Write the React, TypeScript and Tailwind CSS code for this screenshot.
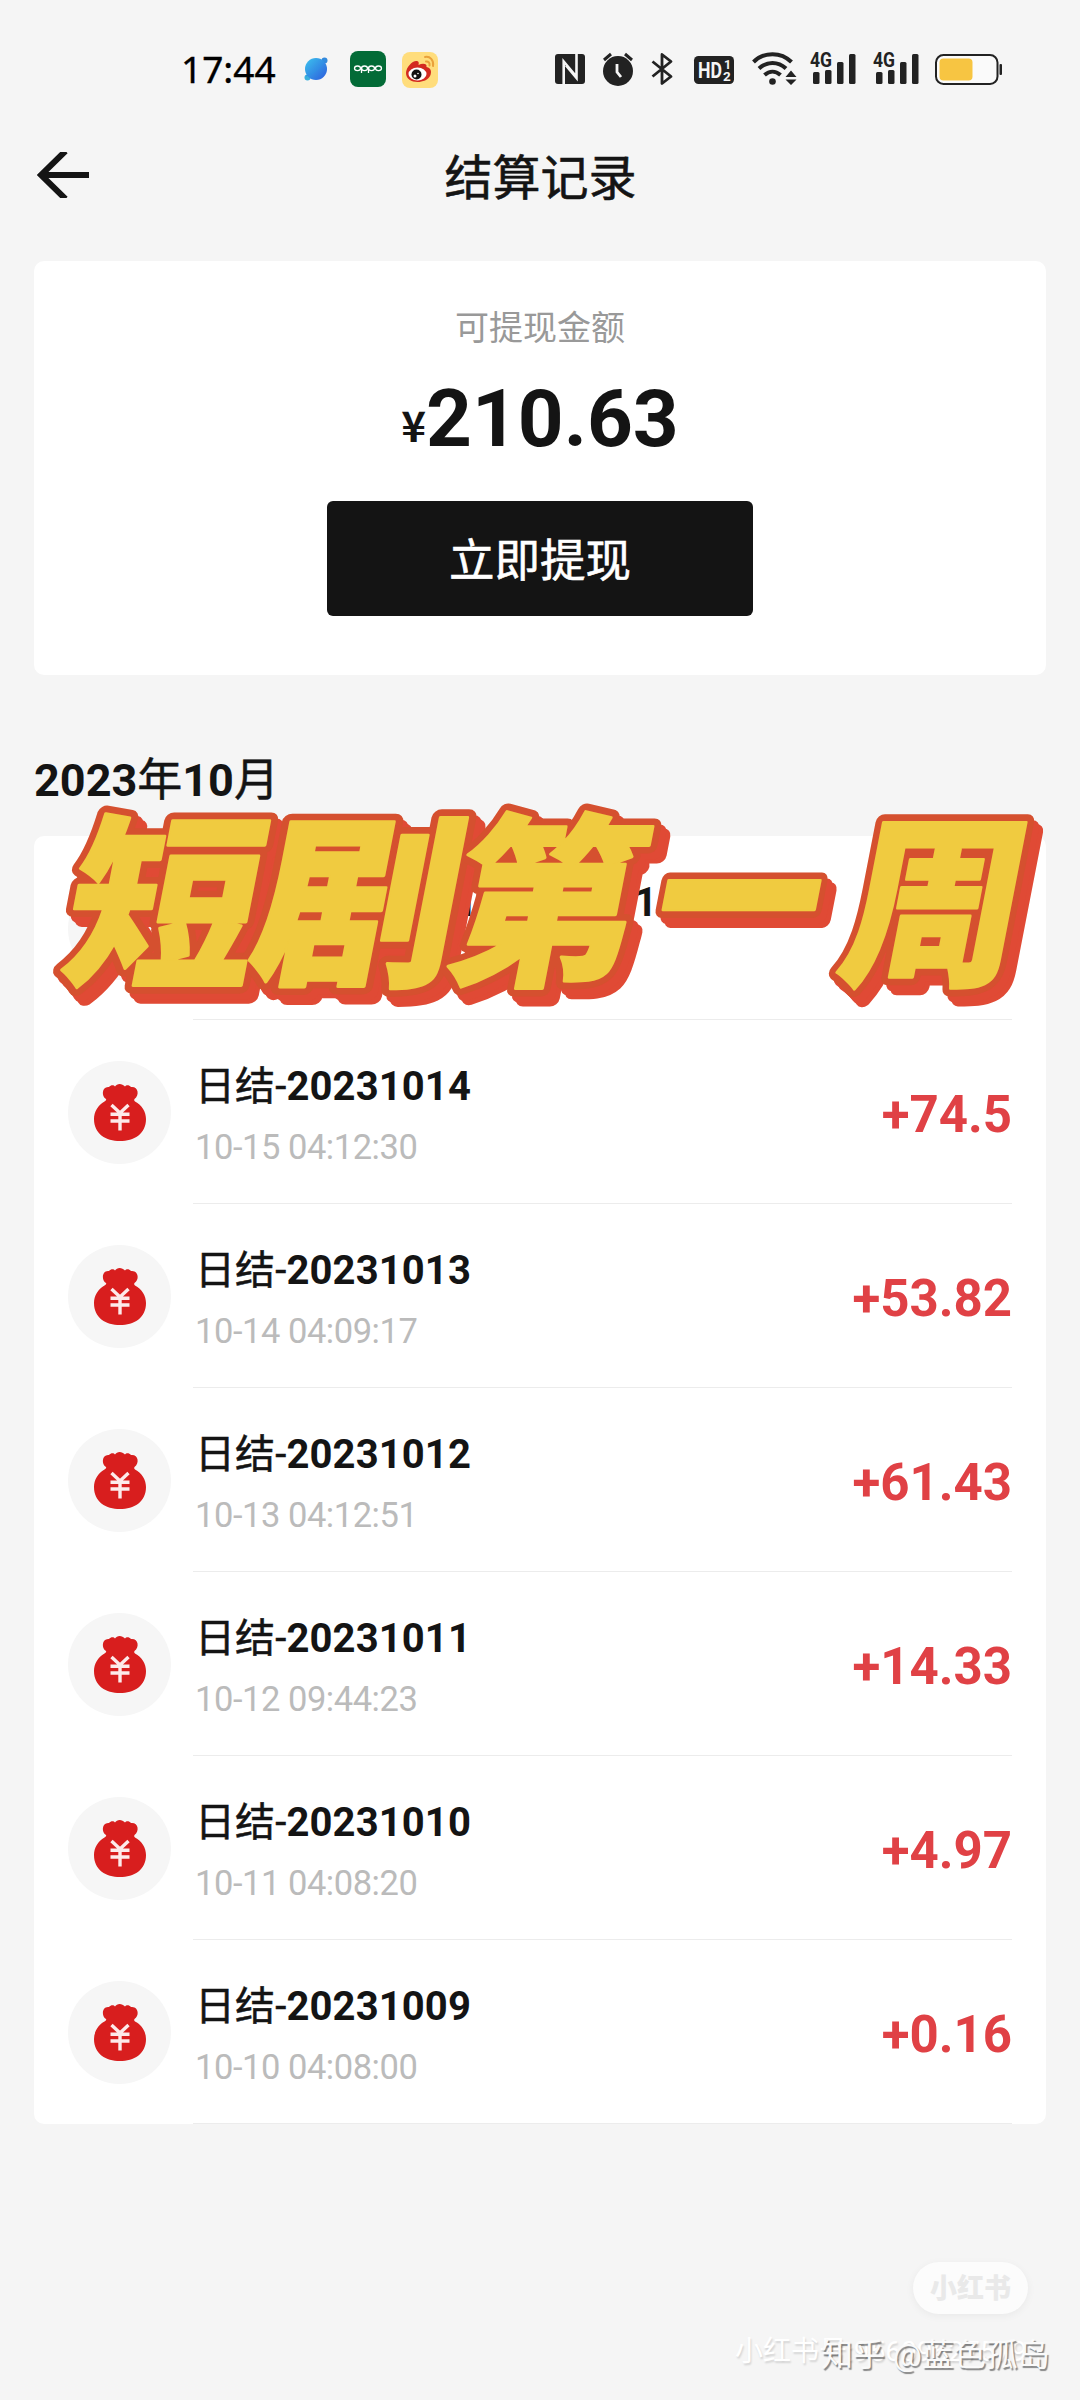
import type { ReactNode } from 'react';

const records = [
  { title: '日结-2023/10/15~2023/10', time: '10-16 04:10:22', amount: '+1.42' },
  { title: '日结-20231014', time: '10-15 04:12:30', amount: '+74.5' },
  { title: '日结-20231013', time: '10-14 04:09:17', amount: '+53.82' },
  { title: '日结-20231012', time: '10-13 04:12:51', amount: '+61.43' },
  { title: '日结-20231011', time: '10-12 09:44:23', amount: '+14.33' },
  { title: '日结-20231010', time: '10-11 04:08:20', amount: '+4.97' },
  { title: '日结-20231009', time: '10-10 04:08:00', amount: '+0.16' },
];

// x / y are the skewed baseline origin, sx / sy stretch the glyph
const headline = [
  { char: '短', x: 57, y: 971, sx: 0.99, sy: 0.95 },
  { char: '剧', x: 245, y: 971, sx: 1.05, sy: 0.95 },
  { char: '第', x: 440, y: 971, sx: 0.98, sy: 0.95 },
  { char: '一', x: 646, y: 967, sx: 0.84, sy: 0.95 },
  { char: '周', x: 834, y: 971, sx: 0.92, sy: 0.95 },
];

// Latin digits are bold while the Chinese characters stay medium
function Mixed({ children }: { children: string }) {
  return (
    <>
      {children.split(/([\u4e00-\u9fff]+-?)/).map((part, i) =>
        /[\u4e00-\u9fff]/.test(part) ? (
          <span className="font-normal [-webkit-text-stroke:0.5px_currentColor]" key={i}>
            {part}
          </span>
        ) : (
          part
        )
      )}
    </>
  );
}

function Card({
  className,
  children,
}: {
  className: string;
  children: ReactNode;
}) {
  return (
    <div className={`mx-[34px] rounded-[10px] bg-white ${className}`}>
      {children}
    </div>
  );
}

function MoneyBag() {
  return (
    <div className="flex h-[103px] w-[103px] shrink-0 items-center justify-center rounded-full bg-[#f6f6f6]">
      <svg className="h-[58px] w-[52px]" viewBox="0 0 52 58">
        <path
          fill="#d81e1e"
          d="M12 16C7 13 8 3 15 4c2-2.500 5-2 6-.5C23 0 28 0 31 3.500c1-1.500 4-2 6 .5 7-1 9 8 3.500 12-.5 1-.5 1.500.5 2.500C48 22 52 29 52 36c0 15-12 22-26 22S0 51 0 36c0-7 4-14 10.500-17.500 1.500-1 2-1.500 1.500-2.500z"
        />
        <path
          fill="none"
          stroke="#fdeaea"
          strokeWidth="3.400"
          d="M17.500 22l8.500 8 8.500-8M16.500 31.300h19M16.500 38h19M26 30v17.500"
        />
      </svg>
    </div>
  );
}

function Signal() {
  return (
    <svg className="h-[34px] w-[46px] overflow-visible" viewBox="0 0 46 34" fill="#222">
      <text
        x="0"
        y="15"
        fontFamily="Roboto, sans-serif"
        fontWeight="700"
        fontSize="20"
        textLength="22"
        lengthAdjust="spacingAndGlyphs"
      >
        4G
      </text>
      <rect x="3" y="20" width="6.500" height="12" rx="1.500" />
      <rect x="15" y="18" width="6.500" height="14" rx="1.500" />
      <rect x="27" y="10" width="6.500" height="22" rx="1.500" />
      <rect x="39" y="2" width="6.500" height="30" rx="1.500" />
    </svg>
  );
}

function StatusBar() {
  return (
    <div className="flex h-[138px] items-start">
      <span className="ml-[181px] mt-[44px] w-[123px] font-['Noto_Sans',sans-serif] text-[37px] leading-[50px] text-black [-webkit-text-stroke:0.4px_currentColor]">
        17:44
      </span>
      <svg className="mt-[57px] h-6 w-6" viewBox="0 0 24 24">
        <defs>
          <linearGradient id="planet" x1="0" y1="0" x2="1" y2="1">
            <stop offset="0" stopColor="#3cc3ee" />
            <stop offset="1" stopColor="#2b5bdc" />
          </linearGradient>
        </defs>
        <circle cx="20.500" cy="3.500" r="3" fill="#3389dc" />
        <circle cx="3.500" cy="20.500" r="3" fill="#3bb0dd" />
        <circle cx="12" cy="12" r="11" fill="url(#planet)" />
        <path d="M2 19C9 17 17 10 21 2" stroke="#2e93e6" fill="none" />
      </svg>
      <svg className="mt-[51px] ml-[22px] h-9 w-9" viewBox="0 0 36 36">
        <rect width="36" height="36" rx="8" fill="#036b37" />
        <g fill="none" stroke="#fff" strokeWidth="1.300">
          <ellipse cx="7.500" cy="17.300" rx="3" ry="2.300" />
          <ellipse cx="14.500" cy="17.300" rx="3" ry="2.300" />
          <ellipse cx="21.500" cy="17.300" rx="3" ry="2.300" />
          <ellipse cx="28.500" cy="17.300" rx="3" ry="2.300" />
          <path d="M11.500 17v5M18.500 17v5" />
        </g>
      </svg>
      <svg className="mt-[52px] ml-4 h-9 w-9" viewBox="0 0 36 36">
        <rect width="36" height="36" rx="8" fill="#ffdd7c" />
        <path
          fill="#d32a20"
          d="M4 21C4 15 11 8 15 9c2 .5 2 2 1.500 4 4-2 9-1.500 8 2 5 1 5 5 4 8-2 5-8 7-13 7-6 0-11.500-3-11.500-9z"
        />
        <ellipse cx="15.500" cy="22" rx="9" ry="6.500" fill="#fff" />
        <circle cx="14.500" cy="22.500" r="5" fill="#111" />
        <circle cx="13" cy="24" r="1.500" fill="#fff" />
        <circle cx="16" cy="21.500" r=".8" fill="#fff" />
        <path
          fill="none"
          stroke="#e9a13b"
          strokeWidth="2"
          strokeLinecap="round"
          d="M23 5c5-1 9 3 8 9M24 9.500c2.500-.3 4 1.500 3.500 4"
        />
      </svg>

      <svg className="mt-[54px] ml-[117px] h-[30px] w-[30px]" viewBox="0 0 30 30">
        <rect width="30" height="30" rx="3" fill="#222" />
        <path
          fill="none"
          stroke="#f5f5f5"
          strokeWidth="2.600"
          d="M8.700 30V7.500L20 21M21.500 0v24L11 11.500"
        />
      </svg>
      <svg className="mt-[52px] ml-[17px] h-[34px] w-8" viewBox="0 0 32 34">
        <circle cx="16" cy="19" r="15" fill="#222" />
        <path d="M2 8l7-6M30 8l-7-6" stroke="#222" strokeWidth="3" />
        <path d="M15 12v8l4 5" fill="none" stroke="#f5f5f5" strokeWidth="2.800" />
      </svg>
      <svg className="mt-[52px] ml-4 h-[34px] w-6" viewBox="0 0 24 34">
        <path
          fill="none"
          stroke="#222"
          strokeWidth="2.800"
          strokeLinejoin="round"
          d="M2.500 9.500L21 24.500 12 31.500V2.500L21 9.500 2.500 24.500"
        />
      </svg>
      <svg className="mt-14 ml-5 h-7 w-10 overflow-visible" viewBox="0 0 40 28">
        <rect width="40" height="28" rx="4.500" fill="#222" />
        <g fill="#f5f5f5" fontFamily="Roboto, sans-serif" fontWeight="700">
          <text x="4" y="22" fontSize="22" textLength="24" lengthAdjust="spacingAndGlyphs">
            HD
          </text>
          <text x="30" y="13" fontSize="12.500">
            1
          </text>
          <text x="29" y="25" fontSize="13.500">
            2
          </text>
        </g>
      </svg>
      <svg className="mt-[51px] ml-[18px] h-[34px] w-[45px]" viewBox="0 0 45 34">
        <g fill="none" stroke="#222" strokeWidth="4">
          <path d="M1.500 11C12 .5 29 .5 39.500 11" />
          <path d="M7 17.500c8-7.500 19-7.500 27 0" />
          <path d="M12.500 24c5-4.500 11-4.500 16 0" />
        </g>
        <circle cx="20.500" cy="30.500" r="3.300" fill="#222" />
        <path d="M33.500 26l5.500-6.500 5.500 6.500zM33.500 28.500l5.500 5.500 5.500-5.500z" fill="#222" />
      </svg>
      <div className="mt-[52px] ml-[13px] flex gap-[17px]">
        <Signal />
        <Signal />
      </div>
      <svg className="mt-[54px] ml-4 h-[31px] w-[68px]" viewBox="0 0 68 31">
        <rect x="1" y="1" width="61.500" height="29" rx="7.500" fill="#fafafa" stroke="#222" strokeWidth="2" />
        <rect x="4.500" y="4.500" width="33" height="22" rx="4" fill="#f7c542" />
        <rect x="64.500" y="10" width="2.500" height="11" rx="1" fill="#222" />
      </svg>
    </div>
  );
}

export default function App() {
  return (
    <div className="relative h-[2400px] w-[1080px] overflow-hidden bg-[#f5f5f5] font-[Roboto,'Noto_Sans_CJK_SC',sans-serif] text-[#141414]">
      <StatusBar />
      <header className="grid h-[123px] grid-cols-[1fr_auto_1fr] items-start px-[37px]">
        <svg className="mt-[14px] h-[46px] w-[52px]" viewBox="0 0 52 46">
          <path
            d="M28.500-1L4 23l24.500 24M3 23h49"
            fill="none"
            stroke="#141414"
            strokeWidth="6"
          />
        </svg>
        <h1 className="pt-[3px] pl-px text-[48px] leading-[76px] [-webkit-text-stroke:0.6px_currentColor]">
          结算记录
        </h1>
      </header>

      <Card className="flex h-[414px] flex-col items-center">
        <p className="mt-[42px] text-[34px] leading-[50px] text-[#999]">可提现金额</p>
        <p className="mt-[21px] flex h-[90px] items-baseline leading-[90px] font-bold">
          <span className="relative -top-1 font-['Noto_Sans_CJK_SC',sans-serif] text-[42px]">
            ¥
          </span>
          <span className="text-[80px]">210.63</span>
        </p>
        <button className="mt-[37px] h-[115px] w-[426px] rounded-[6px] bg-[#141414] pt-[7px] text-[45.5px] text-white [-webkit-text-stroke:0.6px_currentColor]">
          立即提现
        </button>
      </Card>

      <h2 className="mt-[76px] h-[85px] pl-[34px] text-[45px] leading-[60px] font-bold">
        <Mixed>2023年10月</Mixed>
      </h2>

      <Card className="h-[1288px]">
        {records.map(({ title, time, amount }) => (
          <div className="flex h-[184px] items-center pl-[34px]" key={title}>
            <MoneyBag />
            <div className="mr-[34px] ml-[22px] flex h-full flex-1 items-center justify-between border-b border-[#ececec] pt-[6px] pl-[2px]">
              <div className="pt-[4px]">
                <p className="text-[40px] leading-[60px] font-bold tracking-[0.12px]">
                  <Mixed>{title}</Mixed>
                </p>
                <p className="text-[34.5px] leading-[60px] tracking-[-0.45px] text-[#bbb]">
                  {time}
                </p>
              </div>
              <span className="text-[51px] leading-[60px] font-bold text-[#e04145]">
                {amount}
              </span>
            </div>
          </div>
        ))}
      </Card>

      <svg
        className="absolute top-0 left-0 h-[1100px] w-[1080px]"
        viewBox="0 0 1080 1100"
        fontFamily="'Noto Sans CJK SC', sans-serif"
        fontWeight="900"
        fontSize="194"
        strokeLinejoin="round"
      >
        {[
          { dx: 9, dy: 10, fill: '#e04a35', stroke: '#e04a35', width: 17 },
          { dx: 5, dy: 6, fill: '#e04a35', stroke: '#e04a35', width: 17 },
          { dx: 0, dy: 0, fill: '#f0cb40', stroke: '#d5502f', width: 17 },
          { dx: 0, dy: 0, fill: '#f0cb40', stroke: '#f0cb40', width: 3 },
        ].map(({ dx, dy, fill, stroke, width }, layer) => (
          <g
            key={layer}
            aria-hidden={layer < 3}
            fill={fill}
            stroke={stroke}
            strokeWidth={width}
            paintOrder="stroke"
          >
            {headline.map(({ char, x, y, sx, sy }) => (
              <text
                key={char}
                transform={`translate(${x + dx} ${y + dy}) skewX(-11) scale(${sx} ${sy})`}
              >
                {char}
              </text>
            ))}
          </g>
        ))}
      </svg>

      <div className="absolute top-[2262px] left-[913px] flex h-[52px] w-[115px] items-center justify-center rounded-full bg-[#fcfcfc] pt-[3px] text-[27px] font-black text-[#e9e9e9] shadow-[0_2px_8px_rgba(0,0,0,0.05)]">
        小红书
      </div>
      <p className="absolute top-[2331px] left-[735px] text-[28px] leading-[42px] whitespace-nowrap text-white [text-shadow:1px_2px_2px_rgba(0,0,0,0.14)]">
        小红书号:95609627579
      </p>
      <p className="absolute top-[2334px] left-[821px] text-[32px] leading-[42px] whitespace-nowrap text-[#fafafa] [text-shadow:1.5px_1.5px_1px_rgba(0,0,0,0.45)]">
        知乎 @蓝色孤岛
      </p>
    </div>
  );
}
